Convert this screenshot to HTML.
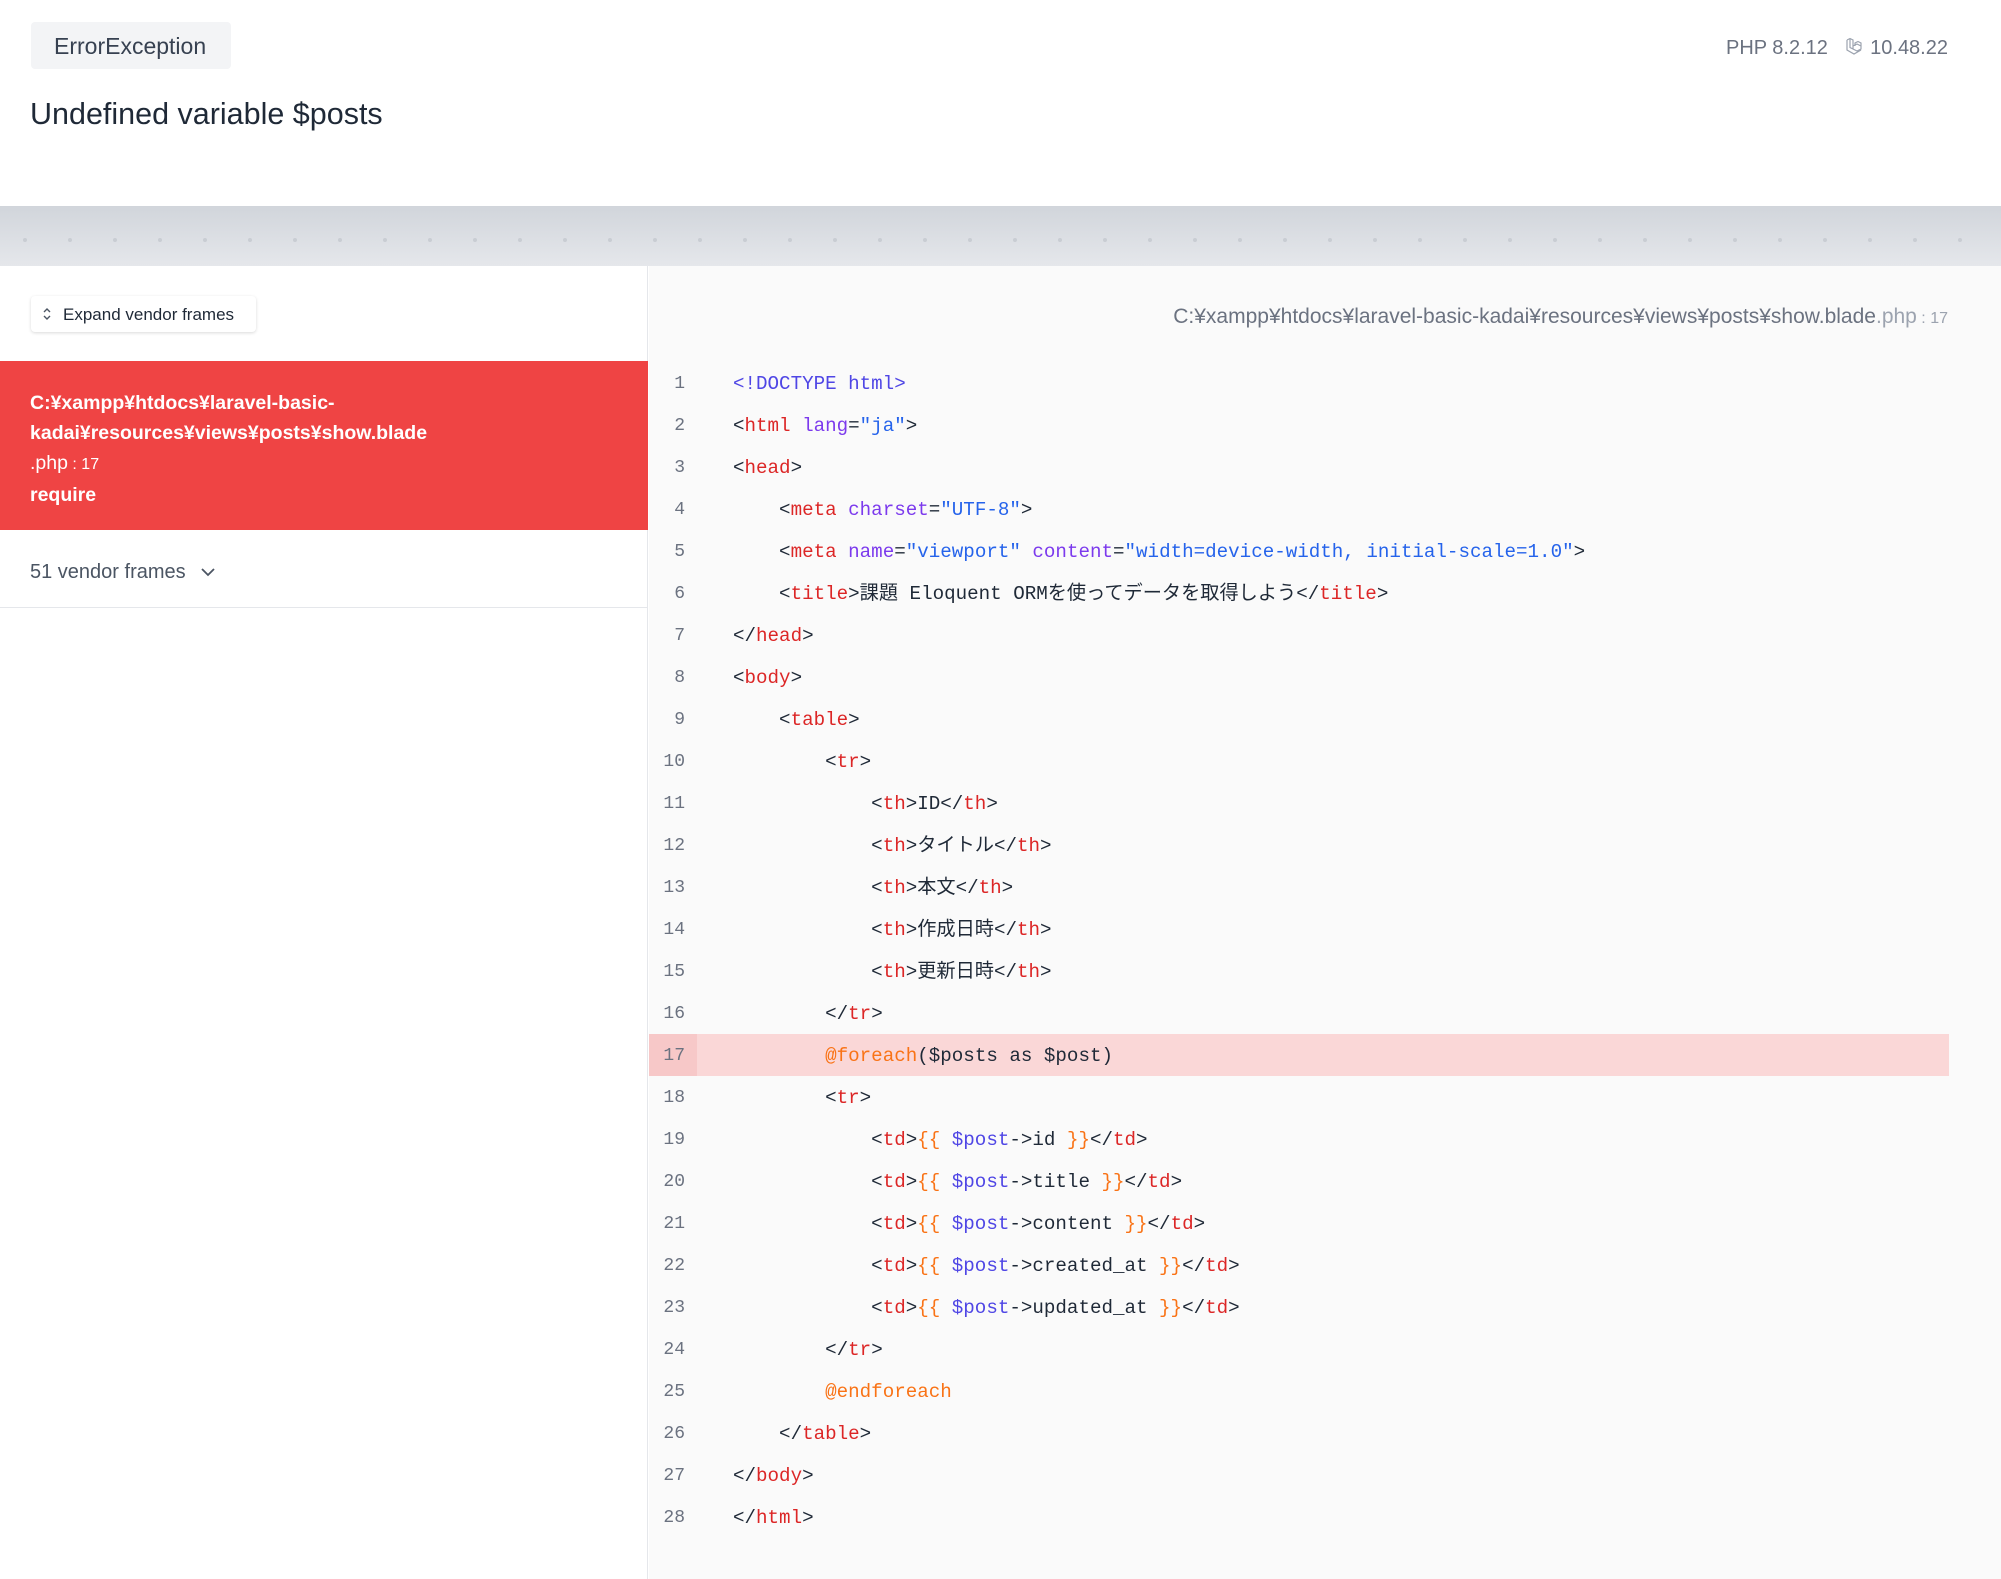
<!DOCTYPE html>
<html><head><meta charset="utf-8"><style>
*{margin:0;padding:0;box-sizing:border-box}
body{width:2001px;height:1579px;overflow:hidden;background:#fff;font-family:"Liberation Sans","Noto Sans CJK JP",sans-serif;color:#1f2937;position:relative}
.abs{position:absolute;white-space:nowrap}
.exc{left:31px;top:22px;width:200px;height:47px;background:#f3f4f6;border-radius:4px;font-size:23px;color:#374151;line-height:49px;padding-left:23px}
.title{left:30px;top:97px;font-size:30.5px;color:#1f2937}
.ver{right:53px;top:37px;font-size:20px;color:#6b7280}
.band{left:0;top:206px;width:2001px;height:60px;background:linear-gradient(#d1d5db,#e5e7eb)}
.dot{position:absolute;top:32px;width:4px;height:4px;border-radius:2px;background:#c9cdd3}
.left{left:0;top:266px;width:648px;height:1313px;background:#fff;border-right:1px solid #e5e7eb}
.right{left:649px;top:266px;width:1352px;height:1313px;background:#fafafa}
.btn{left:31px;top:296px;width:225px;height:36px;background:#fff;border-radius:4px;box-shadow:0 1px 3px rgba(0,0,0,.15);font-size:17px;line-height:37px;padding-left:32px;color:#1f2937}
.red{left:0;top:361px;width:648px;height:169px;background:#ef4444;color:#fff;font-size:19.5px;font-weight:bold;padding:27px 30px;line-height:30px}
.vend{left:30px;top:561px;font-size:20px;color:#4b5563}
.hr{left:0;top:607px;width:648px;height:1px;background:#e5e7eb}
.path{right:53px;top:305px;font-size:21px;color:#6b7280}
.ln{left:649px;width:48px;text-align:right;padding-right:12px;font-family:"Liberation Mono",monospace;font-size:18px;color:#6b7280}
.code{left:733px;font-family:"Liberation Mono","Noto Sans CJK JP",monospace;font-size:19.2px;color:#1f2937}
.t{color:#dc2626}.a{color:#7c3aed}.s{color:#2563eb}.b{color:#f97316}.v{color:#4f46e5}.d{color:#4f46e5}
</style></head><body>
<div class="abs exc">ErrorException</div>
<div class="abs title">Undefined variable $posts</div>
<div class="abs ver">PHP 8.2.12 &nbsp; <svg width="20" height="20" viewBox="0 0 20 20" style="vertical-align:-3px" fill="none" stroke="#9ca3af" stroke-width="1.2"><path d="M2 3l3-1.5 3 1.5v9l4 2 4-2v-3l-4-2-4 2M8 12l-3-1.5V2M2 3v10l7 4 7-4M16 9V6l-3-1.5-3 1.5v3"/></svg> 10.48.22</div>
<div class="abs band" id="band"></div>
<div class="abs left"></div>
<div class="abs right"></div>
<div class="abs btn"><svg class="abs" style="left:11px;top:10px" width="10" height="16" viewBox="0 0 10 16" fill="none" stroke="#4b5563" stroke-width="1.4"><path d="M2 6l3-3 3 3M2 10l3 3 3-3"/></svg>Expand vendor frames</div>
<div class="abs red">C:¥xampp¥htdocs¥laravel-basic-<br>kadai¥resources¥views¥posts¥show.blade<br><span style="font-weight:normal">.php</span><span style="font-weight:normal;font-size:16px"> : 17</span><br>require</div>
<div class="abs vend">51 vendor frames <svg width="18" height="12" viewBox="0 0 18 12" style="margin-left:8px" fill="none" stroke="#4b5563" stroke-width="1.8"><path d="M3 3l6 6 6-6"/></svg></div>
<div class="abs hr"></div>
<div class="abs path">C:¥xampp¥htdocs¥laravel-basic-kadai¥resources¥views¥posts¥show.blade<span style="color:#9ca3af">.php</span><span style="font-size:16px;color:#9ca3af"> : 17</span></div>
<div class="abs" style="left:649px;top:1034px;width:1300px;height:42px;background:#fad7d7"></div>
<div class="abs" style="left:649px;top:1034px;width:48px;height:42px;background:#f7c8c8"></div>
<div id="code"></div>
<script>
var L=[
'<span class="d">&lt;!DOCTYPE html&gt;</span>',
'&lt;<span class="t">html</span> <span class="a">lang</span>=<span class="s">"ja"</span>&gt;',
'&lt;<span class="t">head</span>&gt;',
'    &lt;<span class="t">meta</span> <span class="a">charset</span>=<span class="s">"UTF-8"</span>&gt;',
'    &lt;<span class="t">meta</span> <span class="a">name</span>=<span class="s">"viewport"</span> <span class="a">content</span>=<span class="s">"width=device-width, initial-scale=1.0"</span>&gt;',
'    &lt;<span class="t">title</span>&gt;課題 Eloquent ORMを使ってデータを取得しよう&lt;/<span class="t">title</span>&gt;',
'&lt;/<span class="t">head</span>&gt;',
'&lt;<span class="t">body</span>&gt;',
'    &lt;<span class="t">table</span>&gt;',
'        &lt;<span class="t">tr</span>&gt;',
'            &lt;<span class="t">th</span>&gt;ID&lt;/<span class="t">th</span>&gt;',
'            &lt;<span class="t">th</span>&gt;タイトル&lt;/<span class="t">th</span>&gt;',
'            &lt;<span class="t">th</span>&gt;本文&lt;/<span class="t">th</span>&gt;',
'            &lt;<span class="t">th</span>&gt;作成日時&lt;/<span class="t">th</span>&gt;',
'            &lt;<span class="t">th</span>&gt;更新日時&lt;/<span class="t">th</span>&gt;',
'        &lt;/<span class="t">tr</span>&gt;',
'        <span class="b">@foreach</span>($posts as $post)',
'        &lt;<span class="t">tr</span>&gt;',
'            &lt;<span class="t">td</span>&gt;<span class="b">{{</span> <span class="v">$post</span>-&gt;id <span class="b">}}</span>&lt;/<span class="t">td</span>&gt;',
'            &lt;<span class="t">td</span>&gt;<span class="b">{{</span> <span class="v">$post</span>-&gt;title <span class="b">}}</span>&lt;/<span class="t">td</span>&gt;',
'            &lt;<span class="t">td</span>&gt;<span class="b">{{</span> <span class="v">$post</span>-&gt;content <span class="b">}}</span>&lt;/<span class="t">td</span>&gt;',
'            &lt;<span class="t">td</span>&gt;<span class="b">{{</span> <span class="v">$post</span>-&gt;created_at <span class="b">}}</span>&lt;/<span class="t">td</span>&gt;',
'            &lt;<span class="t">td</span>&gt;<span class="b">{{</span> <span class="v">$post</span>-&gt;updated_at <span class="b">}}</span>&lt;/<span class="t">td</span>&gt;',
'        &lt;/<span class="t">tr</span>&gt;',
'        <span class="b">@endforeach</span>',
'    &lt;/<span class="t">table</span>&gt;',
'&lt;/<span class="t">body</span>&gt;',
'&lt;/<span class="t">html</span>&gt;'];
var h='';
for(var i=0;i<L.length;i++){var y=1035+(i-16)*42;
h+='<div class="abs ln" style="top:'+y+'px;line-height:42px">'+(i+1)+'</div>';
h+='<div class="abs code" style="top:'+y+'px;line-height:42px;white-space:pre">'+L[i]+'</div>';}
document.getElementById('code').innerHTML=h;
var b='';for(var x=23;x<2001;x+=45)b+='<div class="dot" style="left:'+x+'px"></div>';
document.getElementById('band').innerHTML=b;
</script>
</body></html>
